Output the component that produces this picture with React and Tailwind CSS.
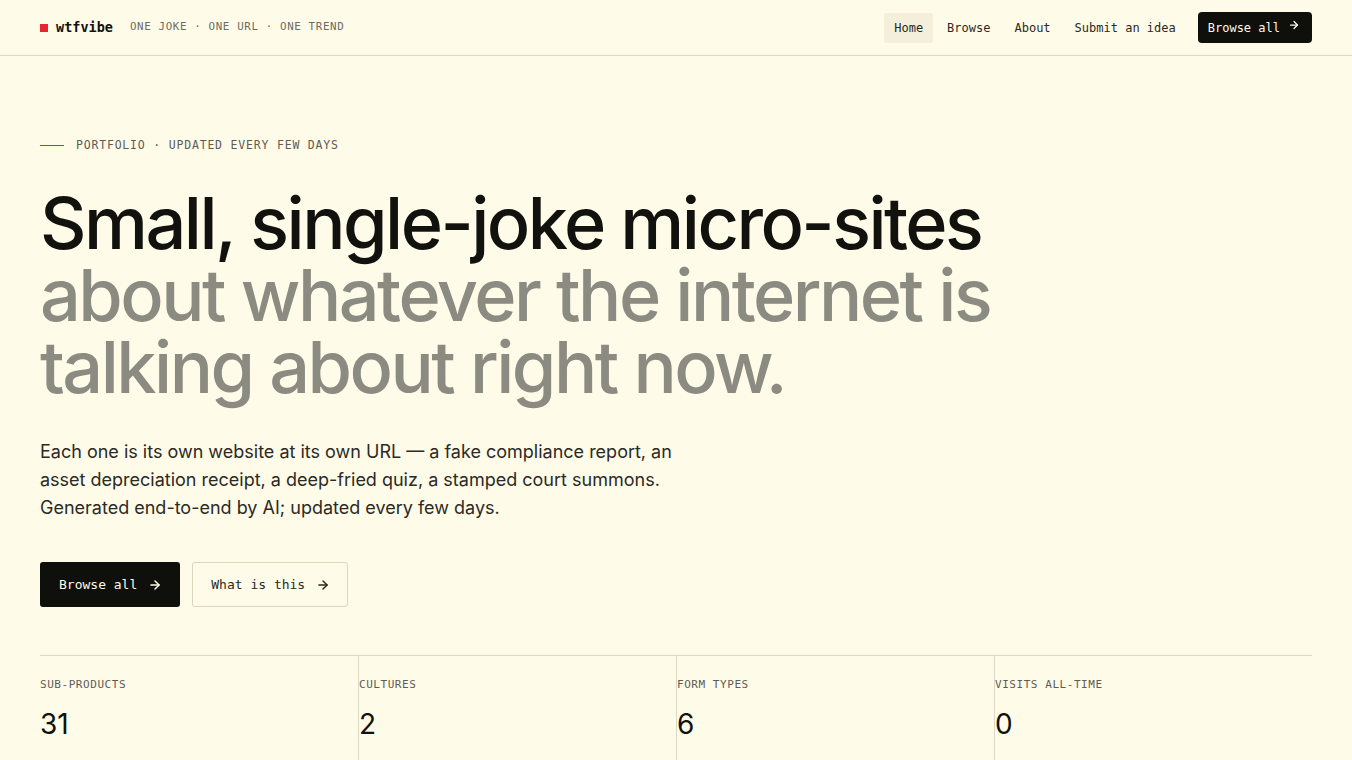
import React from 'react'
import { ArrowRight } from 'lucide-react'

const MONO = "font-['DejaVu_Sans_Mono','Liberation_Mono',monospace]"
const SANS = "font-['Inter','Noto_Sans',sans-serif]"

const STATS = [
  { label: 'SUB-PRODUCTS', value: '31' },
  { label: 'CULTURES', value: '2' },
  { label: 'FORM TYPES', value: '6' },
  { label: 'VISITS ALL-TIME', value: '0' },
]

const NAV = ['Home', 'Browse', 'About', 'Submit an idea']

export default function App() {
  return (
    <div className={`min-h-[760px] w-full bg-[#fffbe9] text-[#11110e] ${SANS}`}>
      {/* Top bar */}
      <header className="h-[56px] border-b border-[#dcd8c6] px-10 flex items-center justify-between">
        <div className="flex items-center">
          <span className="w-2 h-2 bg-[#e5252f]" />
          <span className={`${MONO} ml-2 text-[13.5px] font-bold text-[#11110e]`}>wtfvibe</span>
          <span className={`${MONO} ml-[17px] text-[10.8px] tracking-[0.06em] text-[#6d6b62]`}>
            ONE JOKE · ONE URL · ONE TREND
          </span>
        </div>
        <nav className="flex items-center gap-1">
          {NAV.map((item, i) => (
            <a key={item}
              className={`${MONO} px-[10px] h-[30px] flex items-center rounded-[3px] text-[12px] text-[#2a2a25] ${i === 0 ? 'bg-[#f4efdb]' : ''}`}>
              {item}
            </a>
          ))}
          <button className={`${MONO} ml-2 h-[31px] pl-[10px] pr-[12px] rounded-[4px] bg-[#0f0f0c] text-[#fffbe9] text-[12px] flex items-center gap-[8px]`}>
            Browse all <ArrowRight className="w-3 h-3 -mt-[6px]" strokeWidth={2.5} />
          </button>
        </nav>
      </header>

      <main className="px-10 pt-[81px]">
        {/* Eyebrow */}
        <div className="flex items-center gap-3">
          <span className="w-6 h-px bg-[#c0392b]" />
          <span className={`${MONO} text-[11.5px] tracking-[0.07em] text-[#5e5c55]`}>
            PORTFOLIO · UPDATED EVERY FEW DAYS
          </span>
        </div>

        {/* Headline */}
        <h1 className="mt-[33px] text-[72px] leading-[72px] font-medium tracking-[-0.035em]">
          <span className="text-[#11110e]">Small, single-joke micro-sites</span>
          <br />
          <span className="text-[#8c8b82]">about whatever the internet is</span>
          <br />
          <span className="text-[#8c8b82]">talking about right now.</span>
        </h1>

        <p className="mt-[35px] max-w-[660px] text-[18px] leading-[28px] text-[#2b2a25]">
          Each one is its own website at its own URL — a fake compliance report, an asset depreciation receipt, a deep-fried quiz, a stamped court summons. Generated end-to-end by AI; updated every few days.
        </p>

        {/* Actions */}
        <div className="mt-[40px] flex gap-3">
          <button className={`${MONO} h-[45px] pl-[19px] pr-[18px] rounded-[3px] bg-[#0f0f0c] text-[#fffbe9] text-[13px] flex items-center gap-[11px]`}>
            Browse all <ArrowRight className="w-[14px] h-[14px]" strokeWidth={2.5} />
          </button>
          <button className={`${MONO} h-[45px] pl-[18px] pr-[17px] rounded-[3px] border border-[#dcd6bd] text-[#2a2a25] text-[13px] flex items-center gap-[11px]`}>
            What is this <ArrowRight className="w-[14px] h-[14px]" strokeWidth={2.5} />
          </button>
        </div>

        {/* Stats */}
        <div className="mt-[48px] border-t border-[#dcd8c6] grid grid-cols-4">
          {STATS.map((s, i) => (
            <div key={s.label} className={`pt-[21px] pb-6 ${i > 0 ? 'border-l border-[#dcd8c6]' : ''}`}>
              <div className={`${MONO} text-[11px] tracking-[0.05em] text-[#5e5c55]`}>{s.label}</div>
              <div className="mt-[12px] text-[28px] leading-[36px] text-[#11110e]">{s.value}</div>
            </div>
          ))}
        </div>
      </main>
    </div>
  )
}
